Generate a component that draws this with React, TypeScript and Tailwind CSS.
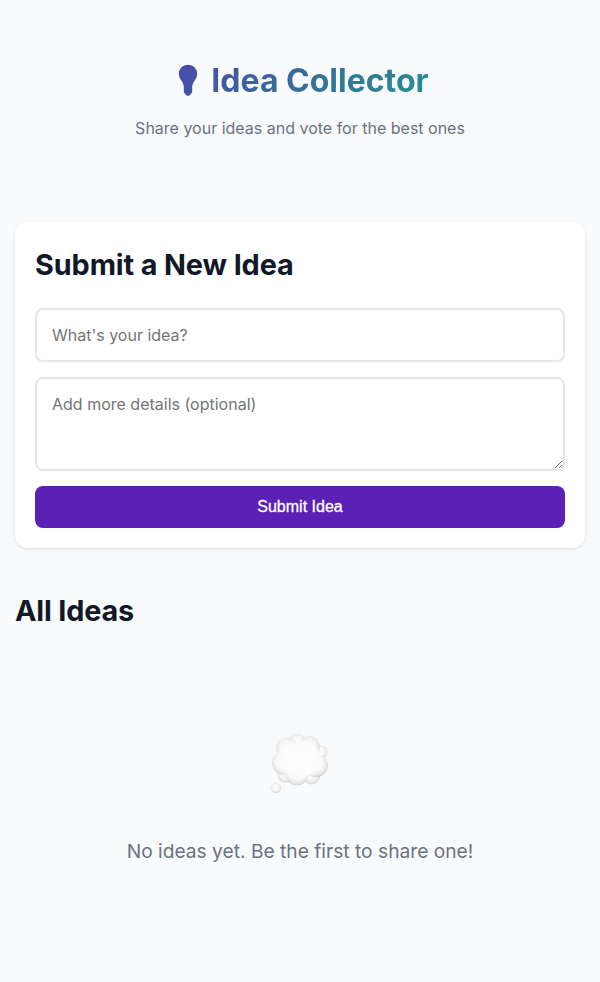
function Cloud() {
  return (
    <svg className="h-16 w-16" viewBox="268 731 64 64" aria-hidden="true">
      <defs>
        <radialGradient id="puff" cx="49%" cy="45%" r="54%">
          <stop offset="0%" stopColor="#fbfbfb" />
          <stop offset="55%" stopColor="#f6f6f7" />
          <stop offset="82%" stopColor="#e9e9ea" />
          <stop offset="100%" stopColor="#d3d3d5" />
        </radialGradient>
        <radialGradient id="core">
          <stop offset="0%" stopColor="#fdfdfd" />
          <stop offset="74%" stopColor="#fcfcfc" />
          <stop offset="100%" stopColor="#fcfcfc" stopOpacity="0" />
        </radialGradient>
      </defs>
      <g fill="url(#puff)">
        <ellipse cx="297.5" cy="740.5" rx="8" ry="6.5" />
        <circle cx="320.5" cy="752" r="7" />
        <circle cx="285.5" cy="774.5" r="8" />
        <circle cx="311.5" cy="776" r="8.5" />
        <ellipse cx="286.5" cy="748" rx="10.5" ry="10.5" />
        <ellipse cx="309.5" cy="747" rx="10.5" ry="11" />
        <ellipse cx="284" cy="763" rx="12" ry="11.5" />
        <ellipse cx="316" cy="765.5" rx="12" ry="11.5" />
        <ellipse cx="297" cy="773.5" rx="11.5" ry="12" />
        <circle cx="275.7" cy="788" r="5.2" />
      </g>
      <ellipse cx="299.5" cy="760" rx="25" ry="21" fill="url(#core)" />
    </svg>
  );
}

export default function App() {
  return (
    <div className="min-h-screen bg-[#f9fafb] px-[15px] pt-10 font-['Inter',sans-serif] text-[#111827]">
      <header className="pt-[21px] pb-[82px] text-center">
        <h1 className="flex h-10 items-center justify-center bg-[linear-gradient(135deg,#5b21b6,#10b981)] bg-clip-text pl-[7px] text-[32px] font-bold leading-10 text-transparent">
          <svg className="mr-[13px] mb-[2px] h-8 w-5" viewBox="178 64 20 32" aria-hidden="true">
            <defs>
              <linearGradient id="bulb" x1="178" y1="64" x2="198" y2="84" gradientUnits="userSpaceOnUse">
                <stop stopColor="#494ca9" />
                <stop offset="1" stopColor="#4354a5" />
              </linearGradient>
            </defs>
            <path
              fill="url(#bulb)"
              d="M188 64.7c-5.3 0-9.2 4-9.2 9.1 0 3 1.4 5.2 2.9 7.2 1.4 1.9 2 3.8 2.1 6.2v3.7c0 1.5.4 2.2 1.3 2.8.5 1.4 1.5 2.1 2.9 2.1s2.4-.7 2.9-2.1c.9-.6 1.3-1.3 1.3-2.8v-3.7c.1-2.4.7-4.3 2.1-6.2 1.5-2 2.9-4.2 2.9-7.2 0-5.1-3.9-9.1-9.2-9.1Z"
            />
          </svg>
          Idea Collector
        </h1>
        <p className="mt-[15px] text-base leading-6 text-[#6b7280]">Share your ideas and vote for the best ones</p>
      </header>
      <section className="rounded-xl bg-white p-5 shadow-sm">
        <h2 className="text-[28.8px] font-bold leading-[46px] tracking-[-0.1px]">Submit a New Idea</h2>
        <input className="mt-5 block h-[54px] w-full rounded-lg border-2 border-gray-200 px-[15px] text-base placeholder:text-[#757575]" placeholder="What's your idea?" />
        <textarea className="mt-[15px] block h-[94px] w-full resize-y rounded-lg border-2 border-gray-200 px-[15px] pt-[15px] text-base leading-5 placeholder:text-[#757575]" placeholder="Add more details (optional)" />
        <button className="mt-[15px] block h-[42px] w-full rounded-lg bg-[#5b21b6] pb-px font-['Liberation_Sans',Arial,sans-serif] text-base font-medium text-white [-webkit-text-stroke:0.3px_white]">Submit Idea</button>
      </section>
      <h2 className="mt-10 text-[28.8px] font-bold leading-[46px] tracking-[-0.15px]">All Ideas</h2>
      <div className="flex flex-col items-center pt-[97px]">
        <Cloud />
        <p className="mt-[41px] text-[19.2px] leading-[31px] text-[#6b7280]">No ideas yet. Be the first to share one!</p>
      </div>
    </div>
  );
}
